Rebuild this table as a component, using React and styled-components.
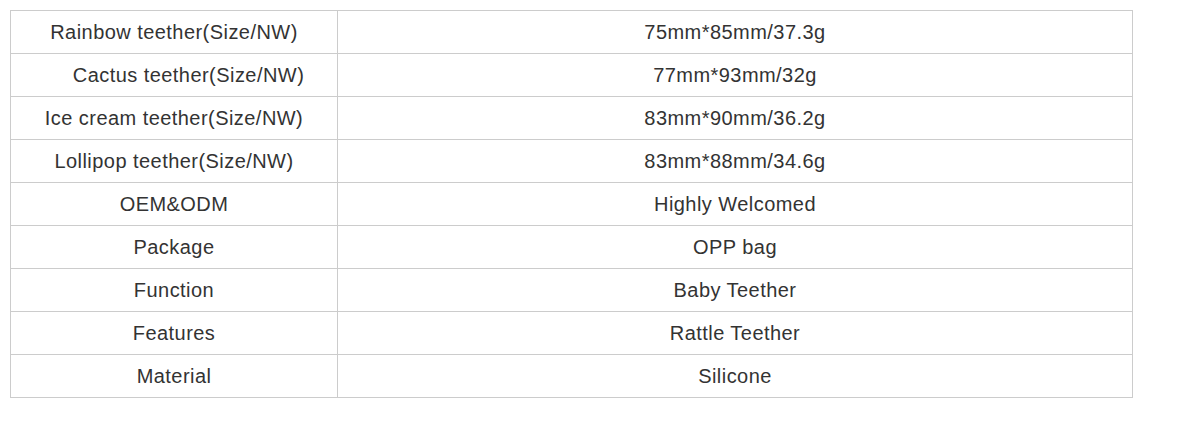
import React from 'react';
import styled, { createGlobalStyle } from 'styled-components';

const GlobalStyle = createGlobalStyle`
  body {
    margin: 0;
    padding: 10px;
    background: #fff;
    font-family: "Liberation Sans", Arial, sans-serif;
  }
`;

const Table = styled.div`
  display: grid;
  grid-template-columns: 327px 795px;
  width: 1123px;
  box-sizing: border-box;
  border-left: 1px solid #ccc;
  border-top: 1px solid #ccc;
`;

const Cell = styled.div`
  height: 43px;
  box-sizing: border-box;
  border-right: 1px solid #ccc;
  border-bottom: 1px solid #ccc;
  display: flex;
  align-items: center;
  justify-content: center;
  padding-left: ${(p) => p.$indent || 0}px;
  font-size: 20px;
  letter-spacing: 0.45px;
  color: #333;
  white-space: nowrap;
`;

const rows = [
  ['Rainbow teether(Size/NW)', '75mm*85mm/37.3g'],
  ['Cactus teether(Size/NW)', '77mm*93mm/32g', 29],
  ['Ice cream teether(Size/NW)', '83mm*90mm/36.2g'],
  ['Lollipop teether(Size/NW)', '83mm*88mm/34.6g'],
  ['OEM&ODM', 'Highly Welcomed'],
  ['Package', 'OPP bag'],
  ['Function', 'Baby Teether'],
  ['Features', 'Rattle Teether'],
  ['Material', 'Silicone'],
];

export default function App() {
  return (
    <>
      <GlobalStyle />
      <Table>
        {rows.map(([label, value, indent]) => (
          <React.Fragment key={label}>
            <Cell $indent={indent}>{label}</Cell>
            <Cell>{value}</Cell>
          </React.Fragment>
        ))}
      </Table>
    </>
  );
}
